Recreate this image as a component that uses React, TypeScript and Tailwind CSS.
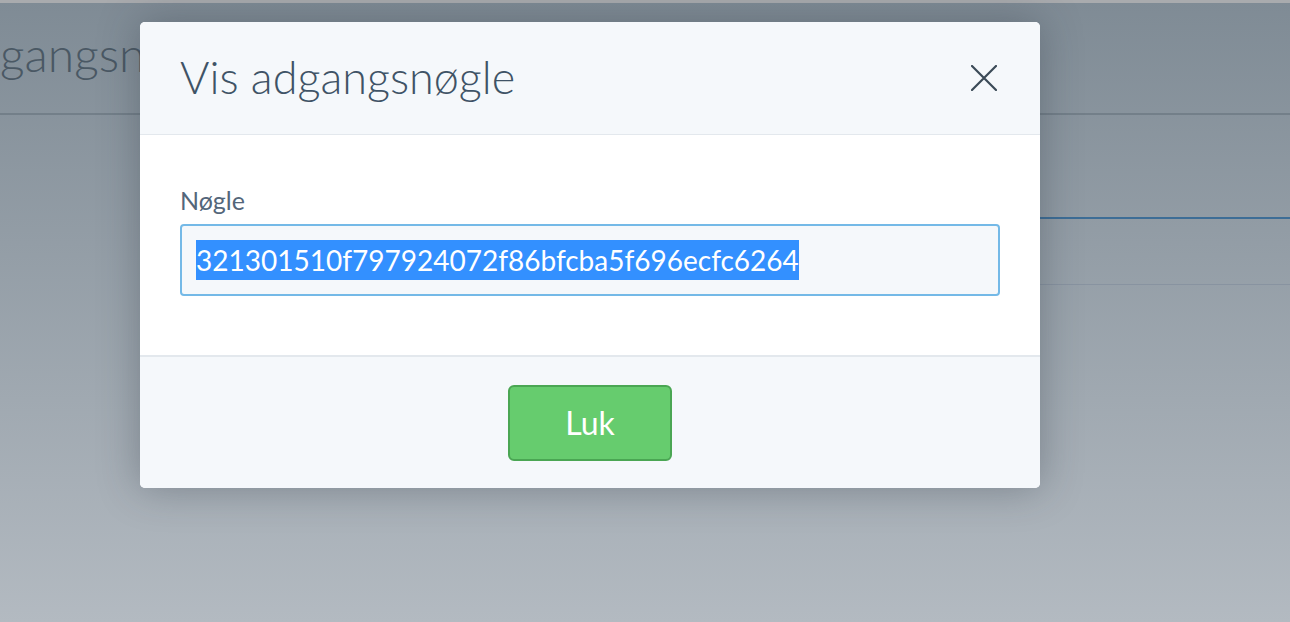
import React from 'react';

const CloseIcon: React.FC = () => (
  <svg width="26" height="26" viewBox="0 0 26 26" fill="none" stroke="#3b4a57" strokeWidth="2.2" strokeLinecap="round">
    <path d="M1 1 L25 25 M25 1 L1 25" />
  </svg>
);

const App: React.FC = () => {
  return (
    <div className="relative h-[622px] w-full overflow-hidden bg-gradient-to-b from-[#7f8b95] to-[#b3bac1] font-['Lato',sans-serif]">
      {/* page behind the dialog */}
      <div className="flex flex-col">
        <div className="h-[3px] bg-[#a9abae]" />
        <div className="flex h-[112px] items-center border-b-2 border-[#737f89]">
          <span className="-mt-[8px] text-[48px] font-light text-[#4a5864]">gangsnøgle</span>
        </div>
        <div className="ml-auto flex w-[300px] flex-col">
          <div className="h-[104px] border-b-2 border-[#3d6d96]" />
          <div className="h-[66px] border-b border-[#8893a0]" />
        </div>
      </div>

      {/* dialog */}
      <div className="absolute inset-0 pl-[140px] pt-[22px]">
        <div className="w-[900px] overflow-hidden rounded-[5px] bg-white shadow-[0_0_40px_rgba(40,50,60,0.35)]">
          <div className="flex h-[113px] items-center justify-between border-b border-[#e3e8ed] bg-[#f5f8fb] pl-[40px] pr-[43px]">
            <h1 className="-mt-[2px] text-[45px] font-light leading-none text-[#3f5366]">Vis adgangsnøgle</h1>
            <CloseIcon />
          </div>
          <div className="px-[40px] pb-[59px] pt-[52px]">
            <label className="mb-[10px] block text-[25px] leading-[27px] text-[#53667a]">Nøgle</label>
            <div className="flex h-[72px] items-center rounded-[4px] border-2 border-[#74b9e7] bg-[#f5f8fb] pl-[14px]">
              <span className="bg-[#3390ff] text-[28px] leading-[40px] text-white">321301510f797924072f86bfcba5f696ecfc6264</span>
            </div>
          </div>
          <div className="flex h-[133px] items-center justify-center border-t-2 border-[#e3e8ed] bg-[#f5f8fb]">
            <button className="mt-[1px] h-[76px] w-[164px] rounded-[6px] border-2 border-[#4aa653] bg-[#66cc6e] text-[32px] text-white">
              Luk
            </button>
          </div>
        </div>
      </div>
    </div>
  );
};

export default App;
